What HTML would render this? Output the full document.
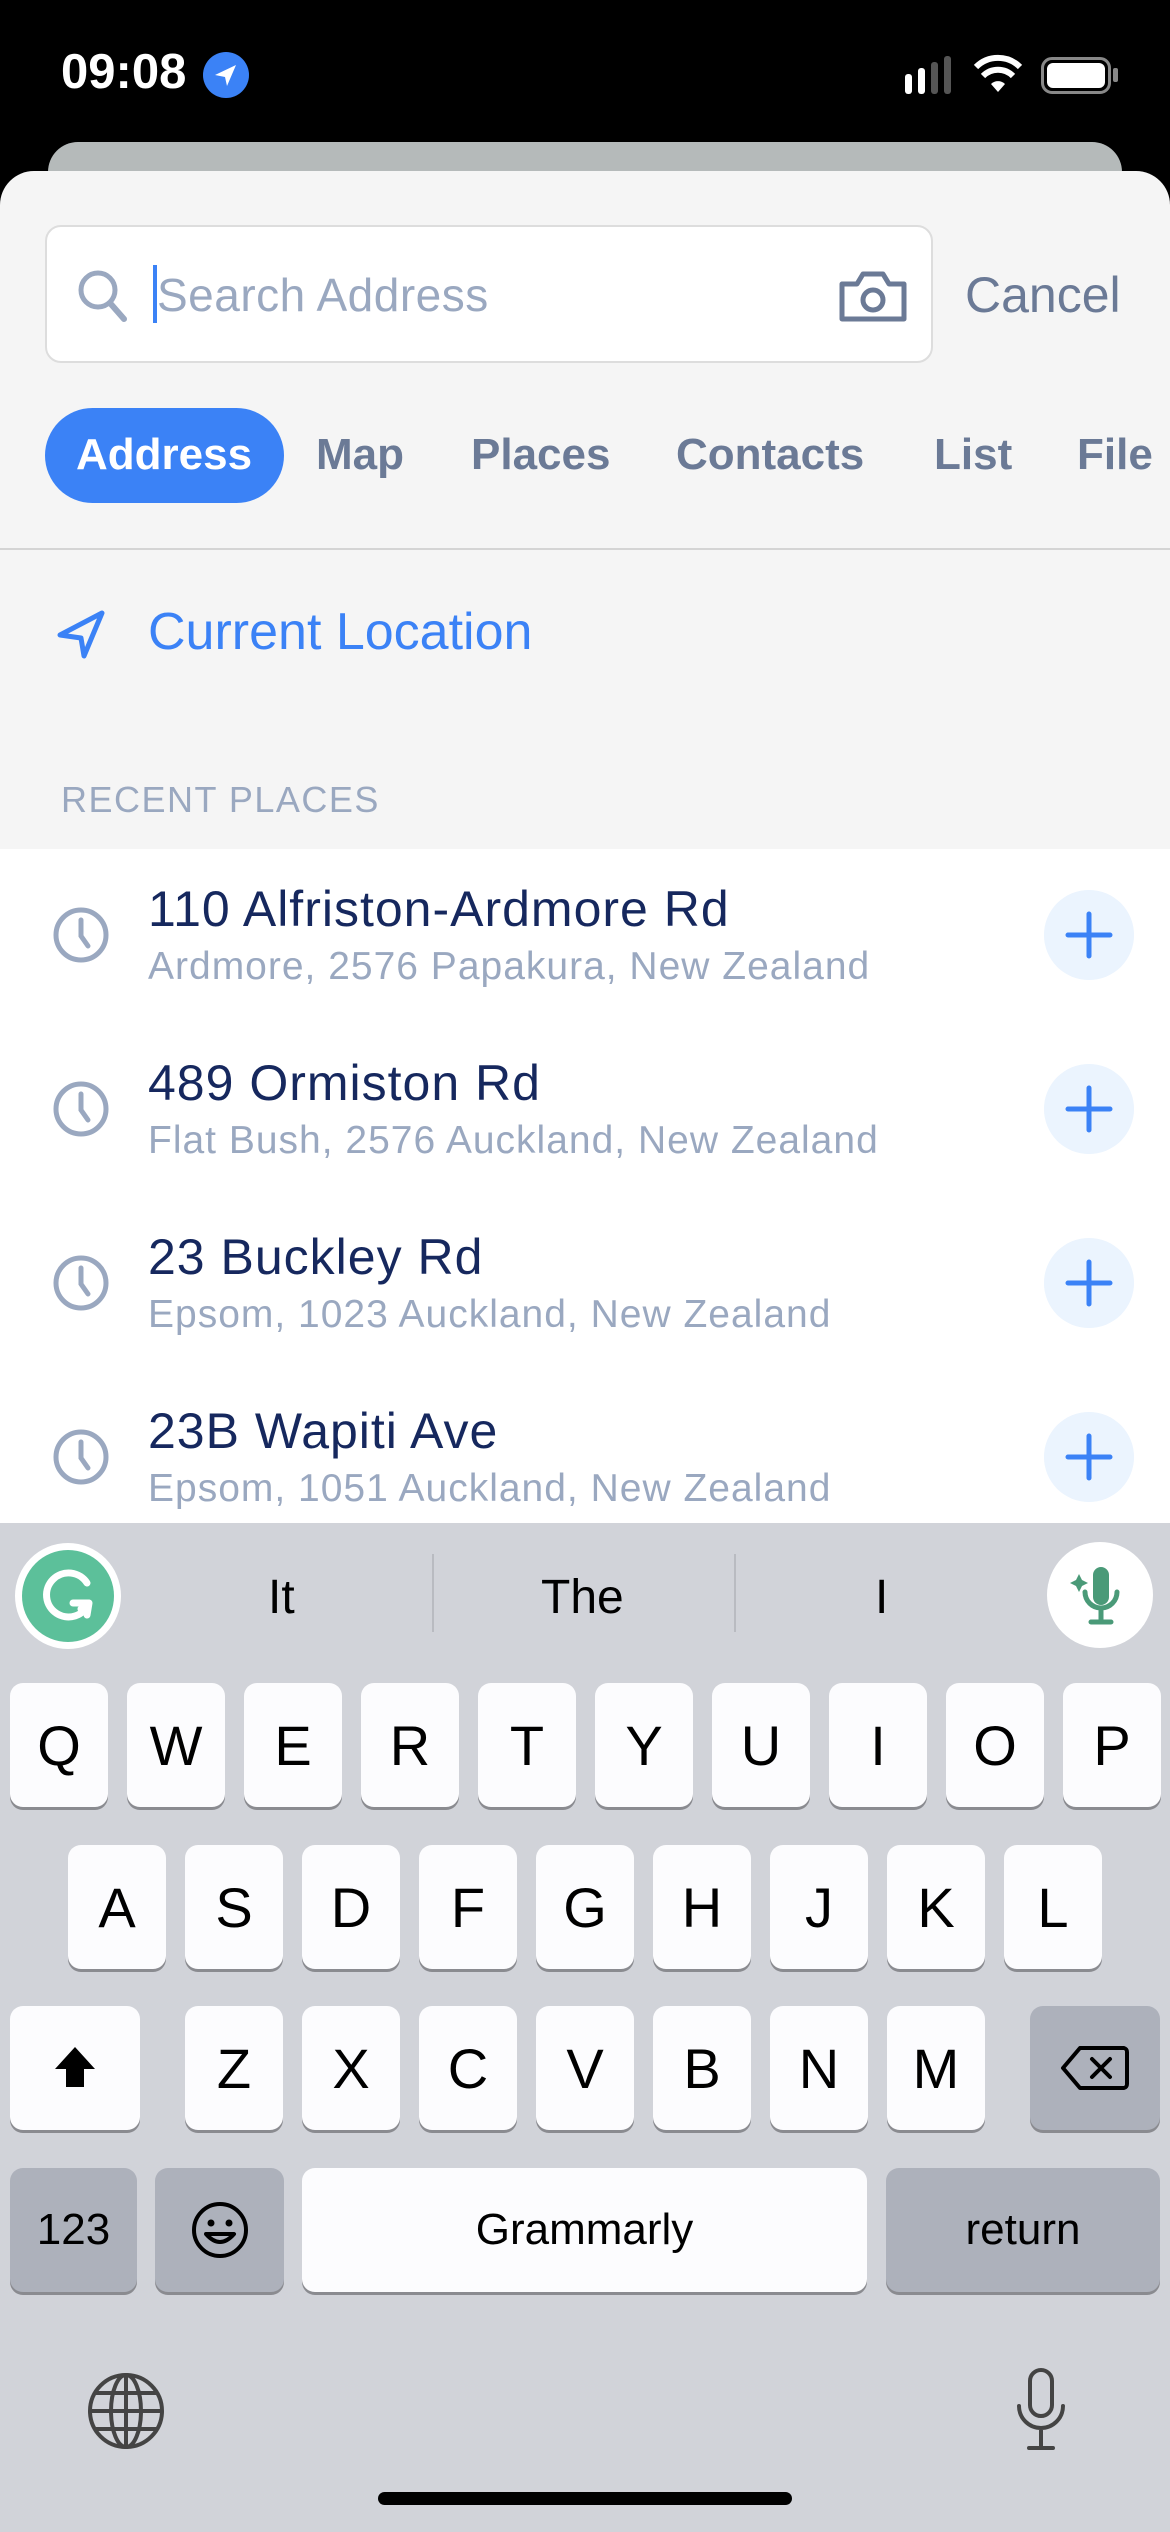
<!DOCTYPE html>
<html><head><meta charset="utf-8">
<style>
*{margin:0;padding:0;box-sizing:border-box}
body{width:1170px;height:2532px;position:relative;overflow:hidden;background:#000;font-family:"Liberation Sans",sans-serif}
.a{position:absolute}
.t{white-space:nowrap}
.key{position:absolute;background:#fcfcfe;border-radius:13px;box-shadow:0 3px 0 #8a8b90;font-size:56px;color:#000;display:flex;align-items:center;justify-content:center;height:124px}
.dk{background:#adb1bb}
.title{position:absolute;left:148px;font-size:50px;letter-spacing:1px;color:#16285e;white-space:nowrap}
.sub{position:absolute;left:148px;font-size:39px;letter-spacing:1px;color:#9aa8c0;white-space:nowrap}
.plus{position:absolute;left:1044px;width:90px;height:90px;border-radius:50%;background:#ebf4fe}
.clock{position:absolute;left:52px;width:58px;height:58px}
</style></head><body>
<div class="a t" style="left:61px;top:44px;font-size:49px;color:#fff;font-weight:600">09:08</div>
<svg class="a" style="left:203px;top:52px" width="46" height="46" viewBox="0 0 46 46"><circle cx="23" cy="23" r="23" fill="#3b82f6"/><path d="M12 23 L33 13 L24 34 L22 25 Z" fill="#fff"/></svg>
<svg class="a" style="left:905px;top:56px" width="50" height="40" viewBox="0 0 50 40"><rect x="0" y="18" width="7" height="20" rx="3" fill="#fff"/><rect x="13" y="12" width="7" height="26" rx="3" fill="#fff"/><rect x="26" y="6" width="7" height="32" rx="3" fill="#555"/><rect x="39" y="0" width="7" height="38" rx="3" fill="#555"/></svg>
<svg class="a" style="left:973px;top:54px" width="50" height="40" viewBox="0 0 50 40"><path d="M25 38 L18 30 A10 10 0 0 1 32 30 Z" fill="#fff"/><path d="M10 22 A21 21 0 0 1 40 22" stroke="#fff" stroke-width="6" fill="none"/><path d="M3 13 A31 31 0 0 1 47 13" stroke="#fff" stroke-width="6" fill="none"/></svg>
<div class="a" style="left:1041px;top:57px;width:70px;height:37px;border:3px solid #888;border-radius:11px"><div style="margin:3px;height:25px;background:#fff;border-radius:6px"></div></div>
<div class="a" style="left:1113px;top:68px;width:5px;height:14px;background:#888;border-radius:2px"></div>
<div class="a" style="left:48px;top:142px;width:1074px;height:60px;background:#b5baba;border-radius:30px 30px 0 0"></div>
<div class="a" style="left:0;top:171px;width:1170px;height:1400px;background:#f5f5f5;border-radius:34px 34px 0 0"></div>
<div class="a" style="left:45px;top:225px;width:888px;height:138px;background:#fff;border:2px solid #ddd;border-radius:16px"></div>
<svg class="a" style="left:76px;top:268px" width="54" height="56" viewBox="0 0 54 56"><circle cx="22" cy="22" r="17" stroke="#9aa8c0" stroke-width="5" fill="none"/><path d="M34 35 L48 51" stroke="#9aa8c0" stroke-width="6" stroke-linecap="round"/></svg>
<div class="a" style="left:153px;top:265px;width:4px;height:58px;background:#3b82f6"></div>
<div class="a t" style="left:157px;top:268px;font-size:46px;letter-spacing:0.5px;color:#9aa8c0">Search Address</div>
<svg class="a" style="left:839px;top:270px" width="68" height="52" viewBox="0 0 68 52"><path d="M3 14 H18 L24 4 H44 L50 14 H65 V49 H3 Z" stroke="#6b7a96" stroke-width="5" fill="none" stroke-linejoin="round"/><circle cx="34" cy="30" r="10" stroke="#6b7a96" stroke-width="5" fill="none"/></svg>
<div class="a t" style="left:965px;top:266px;font-size:50px;color:#6b7a96">Cancel</div>
<div class="a" style="left:45px;top:408px;width:239px;height:95px;background:#3b82f6;border-radius:48px"></div>
<div class="a t" style="left:76px;top:430px;font-size:44px;color:#fff;font-weight:600">Address</div>
<div class="a t" style="left:316px;top:430px;font-size:44px;color:#6b7a96;font-weight:600">Map</div>
<div class="a t" style="left:471px;top:430px;font-size:44px;color:#6b7a96;font-weight:600">Places</div>
<div class="a t" style="left:676px;top:430px;font-size:44px;color:#6b7a96;font-weight:600">Contacts</div>
<div class="a t" style="left:934px;top:430px;font-size:44px;color:#6b7a96;font-weight:600">List</div>
<div class="a t" style="left:1077px;top:430px;font-size:44px;color:#6b7a96;font-weight:600">File</div>
<div class="a" style="left:0;top:548px;width:1170px;height:2px;background:#d4d4d4"></div>
<svg class="a" style="left:56px;top:608px" width="52" height="52" viewBox="0 0 52 52"><path d="M4 27 L46 5 L28 48 L25 30 Z" stroke="#3b82f6" stroke-width="5" fill="none" stroke-linejoin="round"/></svg>
<div class="a t" style="left:148px;top:602px;font-size:52px;color:#3b82f6">Current Location</div>
<div class="a t" style="left:61px;top:779px;font-size:36px;letter-spacing:1.5px;color:#9aa8c0">RECENT PLACES</div>
<div class="a" style="left:0;top:849px;width:1170px;height:674px;background:#fff"></div>
<svg class="clock" style="top:906px" viewBox="0 0 58 58"><circle cx="29" cy="29" r="25" stroke="#9aa8c0" stroke-width="5" fill="none"/><path d="M29 14 V30 L36 40" stroke="#9aa8c0" stroke-width="5" fill="none" stroke-linecap="round"/></svg>
<div class="title" style="top:880px">110 Alfriston-Ardmore Rd</div>
<div class="sub" style="top:945px">Ardmore, 2576 Papakura, New Zealand</div>
<svg class="clock" style="top:1080px" viewBox="0 0 58 58"><circle cx="29" cy="29" r="25" stroke="#9aa8c0" stroke-width="5" fill="none"/><path d="M29 14 V30 L36 40" stroke="#9aa8c0" stroke-width="5" fill="none" stroke-linecap="round"/></svg>
<div class="title" style="top:1054px">489 Ormiston Rd</div>
<div class="sub" style="top:1119px">Flat Bush, 2576 Auckland, New Zealand</div>
<svg class="clock" style="top:1254px" viewBox="0 0 58 58"><circle cx="29" cy="29" r="25" stroke="#9aa8c0" stroke-width="5" fill="none"/><path d="M29 14 V30 L36 40" stroke="#9aa8c0" stroke-width="5" fill="none" stroke-linecap="round"/></svg>
<div class="title" style="top:1228px">23 Buckley Rd</div>
<div class="sub" style="top:1293px">Epsom, 1023 Auckland, New Zealand</div>
<svg class="clock" style="top:1428px" viewBox="0 0 58 58"><circle cx="29" cy="29" r="25" stroke="#9aa8c0" stroke-width="5" fill="none"/><path d="M29 14 V30 L36 40" stroke="#9aa8c0" stroke-width="5" fill="none" stroke-linecap="round"/></svg>
<div class="title" style="top:1402px">23B Wapiti Ave</div>
<div class="sub" style="top:1467px">Epsom, 1051 Auckland, New Zealand</div>
<svg class="plus" style="top:890px" viewBox="0 0 90 90"><circle cx="45" cy="45" r="45" fill="#ebf4fe"/><path d="M45 24 V66 M24 45 H66" stroke="#3b82f6" stroke-width="5" stroke-linecap="round"/></svg>
<svg class="plus" style="top:1064px" viewBox="0 0 90 90"><circle cx="45" cy="45" r="45" fill="#ebf4fe"/><path d="M45 24 V66 M24 45 H66" stroke="#3b82f6" stroke-width="5" stroke-linecap="round"/></svg>
<svg class="plus" style="top:1238px" viewBox="0 0 90 90"><circle cx="45" cy="45" r="45" fill="#ebf4fe"/><path d="M45 24 V66 M24 45 H66" stroke="#3b82f6" stroke-width="5" stroke-linecap="round"/></svg>
<svg class="plus" style="top:1412px" viewBox="0 0 90 90"><circle cx="45" cy="45" r="45" fill="#ebf4fe"/><path d="M45 24 V66 M24 45 H66" stroke="#3b82f6" stroke-width="5" stroke-linecap="round"/></svg>
<div class="a" style="left:0;top:1523px;width:1170px;height:1009px;background:#d1d3d9"></div>
<svg class="a" style="left:15px;top:1543px" width="106" height="106" viewBox="0 0 106 106"><circle cx="53" cy="53" r="53" fill="#fff"/><circle cx="53" cy="53" r="46" fill="#5cc09a"/><path d="M72 40 A22 22 0 1 0 74 60 L58 60 M66 66 L74 60 L72 72" stroke="#fff" stroke-width="7" fill="none" stroke-linecap="round" stroke-linejoin="round"/></svg>
<div class="a t" style="left:268px;top:1570px;font-size:48px;color:#000">It</div>
<div class="a" style="left:432px;top:1554px;width:2px;height:78px;background:#b9bbc1"></div>
<div class="a t" style="left:541px;top:1570px;font-size:48px;color:#000">The</div>
<div class="a" style="left:734px;top:1554px;width:2px;height:78px;background:#b9bbc1"></div>
<div class="a t" style="left:875px;top:1570px;font-size:48px;color:#000">I</div>
<svg class="a" style="left:1045px;top:1540px" width="110" height="110" viewBox="0 0 110 110"><circle cx="55" cy="55" r="53" fill="#fff"/><rect x="48" y="27" width="16" height="38" rx="8" fill="#4a9a78"/><path d="M40 52 A16 16 0 0 0 72 52 M56 68 V80 M46 82 H66" stroke="#4a9a78" stroke-width="5" fill="none" stroke-linecap="round"/><path d="M34 34 l3 6 6 3 -6 3 -3 6 -3 -6 -6 -3 6 -3z" fill="#4a9a78"/></svg>
<div class="key" style="left:10px;top:1683px;width:98px">Q</div>
<div class="key" style="left:127px;top:1683px;width:98px">W</div>
<div class="key" style="left:244px;top:1683px;width:98px">E</div>
<div class="key" style="left:361px;top:1683px;width:98px">R</div>
<div class="key" style="left:478px;top:1683px;width:98px">T</div>
<div class="key" style="left:595px;top:1683px;width:98px">Y</div>
<div class="key" style="left:712px;top:1683px;width:98px">U</div>
<div class="key" style="left:829px;top:1683px;width:98px">I</div>
<div class="key" style="left:946px;top:1683px;width:98px">O</div>
<div class="key" style="left:1063px;top:1683px;width:98px">P</div>
<div class="key" style="left:68px;top:1845px;width:98px">A</div>
<div class="key" style="left:185px;top:1845px;width:98px">S</div>
<div class="key" style="left:302px;top:1845px;width:98px">D</div>
<div class="key" style="left:419px;top:1845px;width:98px">F</div>
<div class="key" style="left:536px;top:1845px;width:98px">G</div>
<div class="key" style="left:653px;top:1845px;width:98px">H</div>
<div class="key" style="left:770px;top:1845px;width:98px">J</div>
<div class="key" style="left:887px;top:1845px;width:98px">K</div>
<div class="key" style="left:1004px;top:1845px;width:98px">L</div>
<div class="key" style="left:10px;top:2006px;width:130px"><svg width="50" height="50" viewBox="0 0 50 50"><path d="M25 4 L45 26 H34 V44 H16 V26 H5 Z" fill="#000"/></svg></div>
<div class="key" style="left:185px;top:2006px;width:98px">Z</div>
<div class="key" style="left:302px;top:2006px;width:98px">X</div>
<div class="key" style="left:419px;top:2006px;width:98px">C</div>
<div class="key" style="left:536px;top:2006px;width:98px">V</div>
<div class="key" style="left:653px;top:2006px;width:98px">B</div>
<div class="key" style="left:770px;top:2006px;width:98px">N</div>
<div class="key" style="left:887px;top:2006px;width:98px">M</div>
<div class="key dk" style="left:1030px;top:2006px;width:130px"><svg width="70" height="46" viewBox="0 0 70 46"><path d="M20 3 H64 A4 4 0 0 1 67 7 V39 A4 4 0 0 1 64 43 H20 L3 23 Z" stroke="#000" stroke-width="4" fill="none" stroke-linejoin="round"/><path d="M32 14 L50 32 M50 14 L32 32" stroke="#000" stroke-width="4" stroke-linecap="round"/></svg></div>
<div class="key dk" style="left:10px;top:2168px;width:127px;font-size:44px">123</div>
<div class="key dk" style="left:155px;top:2168px;width:129px"><svg width="60" height="60" viewBox="0 0 60 60"><circle cx="30" cy="30" r="26" stroke="#000" stroke-width="4" fill="none"/><circle cx="21" cy="23" r="3.5"/><circle cx="39" cy="23" r="3.5"/><path d="M16 34 Q30 50 44 34 Z" fill="none" stroke="#000" stroke-width="4" stroke-linejoin="round"/></svg></div>
<div class="key" style="left:302px;top:2168px;width:565px;font-size:44px">Grammarly</div>
<div class="key dk" style="left:886px;top:2168px;width:274px;font-size:44px">return</div>
<svg class="a" style="left:86px;top:2371px" width="80" height="80" viewBox="0 0 80 80"><g stroke="#444" stroke-width="4" fill="none"><circle cx="40" cy="40" r="36"/><ellipse cx="40" cy="40" rx="15" ry="36"/><path d="M40 4 V76 M4 40 H76 M10 22 H70 M10 58 H70"/></g></svg>
<svg class="a" style="left:1011px;top:2366px" width="60" height="90" viewBox="0 0 60 90"><g stroke="#444" stroke-width="4" fill="none" stroke-linecap="round"><rect x="19" y="4" width="22" height="46" rx="11"/><path d="M8 40 A22 22 0 0 0 52 40 M30 62 V80 M18 82 H42"/></g></svg>
<div class="a" style="left:378px;top:2492px;width:414px;height:13px;background:#000;border-radius:7px"></div>
</body></html>
